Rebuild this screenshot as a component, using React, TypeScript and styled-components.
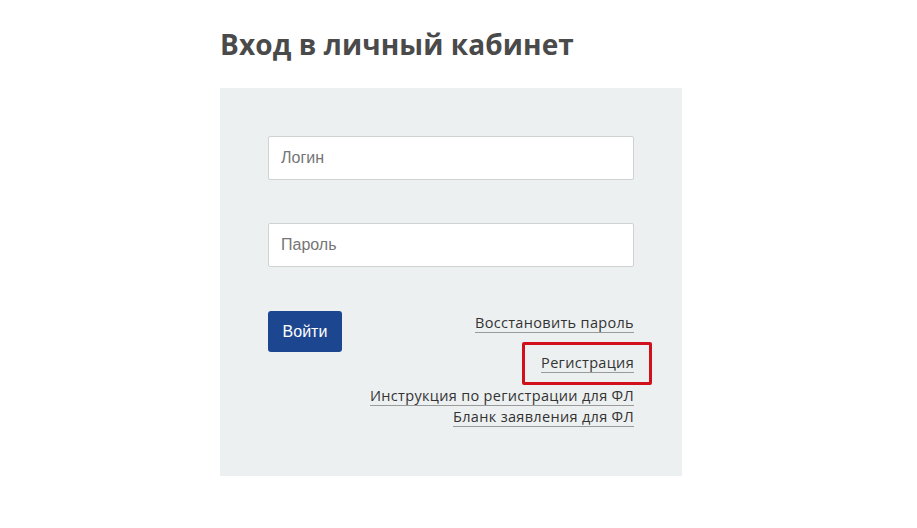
import React from "react";
import styled, { createGlobalStyle } from "styled-components";

const Global = createGlobalStyle`
  html, body { margin: 0; padding: 0; background: #ffffff; }
  body { font-family: "Open Sans", "Liberation Sans", sans-serif; }
`;

const Page = styled.div`
  padding: 22px 0 52px 220px;
`;

const Title = styled.h1`
  margin: 0 0 22px;
  height: 44px;
  font-family: "Open Sans", "Liberation Sans", sans-serif;
  font-weight: 700;
  font-size: 28px;
  line-height: 44px;
  color: #4a4a4a;
  letter-spacing: 0.1px;
`;

const Panel = styled.div`
  width: 462px;
  box-sizing: border-box;
  background: #edf0f1;
  padding: 48px 48px 49px;
  display: flex;
  flex-direction: column;
`;

const Input = styled.input<{ $gap: number }>`
  box-sizing: border-box;
  width: 366px;
  height: 44px;
  border: 1px solid #cfd2d3;
  border-radius: 2px;
  background: #fff;
  padding: 0 12px;
  font-family: "Liberation Sans", Arial, sans-serif;
  font-size: 16px;
  color: #333;
  margin-bottom: ${(p) => p.$gap}px;
  outline: none;
  &::placeholder { color: #757575; }
`;

const Row = styled.div`
  display: flex;
  justify-content: space-between;
  align-items: flex-start;
`;

const Button = styled.button`
  width: 74px;
  height: 41px;
  border: none;
  border-radius: 3px;
  background: #1d4691;
  color: #fff;
  font-family: "Liberation Sans", Arial, sans-serif;
  font-size: 16px;
  padding: 0;
  cursor: pointer;
`;

const Links = styled.div`
  display: flex;
  flex-direction: column;
  align-items: flex-end;
  padding-top: 3px;
`;

const Link = styled.a<{ $mt: number; $marked?: boolean }>`
  position: relative;
  margin-top: ${(p) => p.$mt}px;
  font-family: "Open Sans", "Liberation Sans", sans-serif;
  font-size: 14.5px;
  line-height: 18px;
  color: #333;
  text-decoration: none;
  border-bottom: 1px solid #9a9a9a;
  letter-spacing: 0.32px;
  ${(p) =>
    p.$marked &&
    `
    &::after {
      content: "";
      position: absolute;
      left: -19px;
      right: -18px;
      top: -12px;
      bottom: -13px;
      border: 3px solid #d0101b;
      border-radius: 2px;
    }
  `}
`;

export default function App() {
  return (
    <>
      <Global />
      <Page>
        <Title>Вход в личный кабинет</Title>
        <Panel>
          <Input $gap={43} placeholder="Логин" />
          <Input $gap={44} type="password" placeholder="Пароль" />
          <Row>
            <Button>Войти</Button>
            <Links>
              <Link $mt={0} href="#">Восстановить пароль</Link>
              <Link $mt={21} $marked href="#">Регистрация</Link>
              <Link $mt={14} href="#">Инструкция по регистрации для ФЛ</Link>
              <Link $mt={2} href="#">Бланк заявления для ФЛ</Link>
            </Links>
          </Row>
        </Panel>
      </Page>
    </>
  );
}
